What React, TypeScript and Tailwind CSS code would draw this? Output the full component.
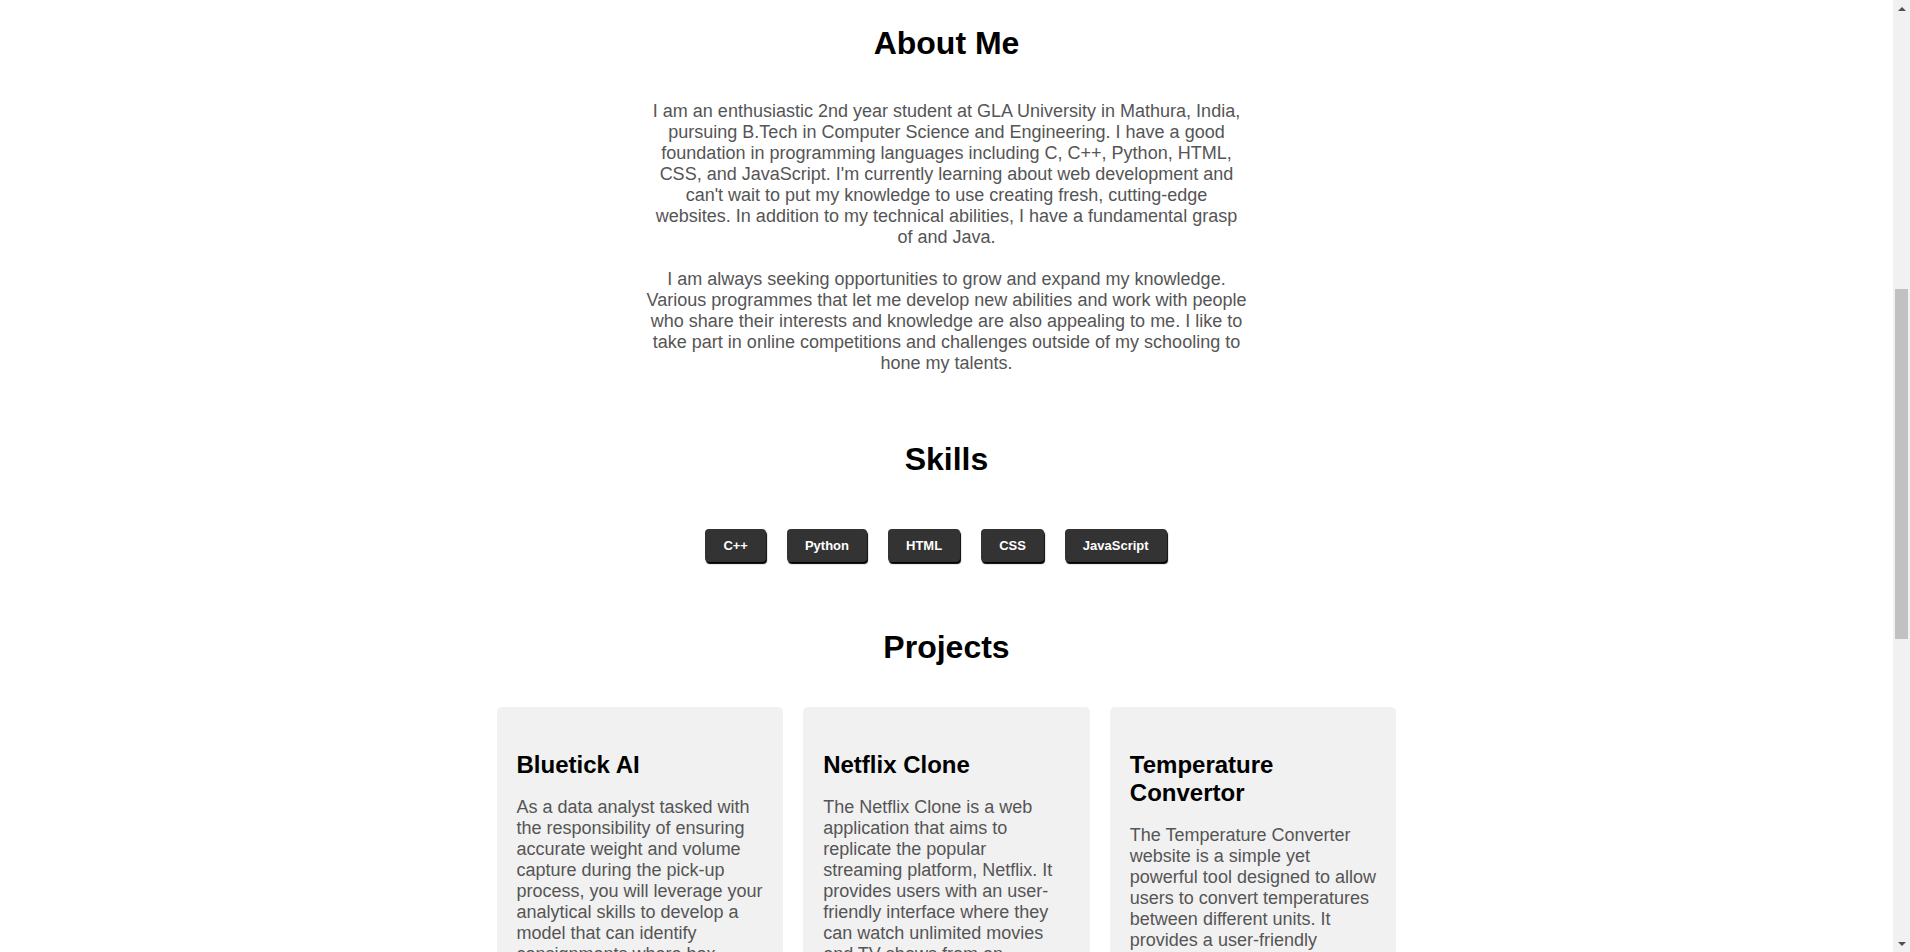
// App.tsx

const skills = ["C++", "Python", "HTML", "CSS", "JavaScript"];

const projects = [
  {
    title: "Bluetick AI",
    text: "As a data analyst tasked with the responsibility of ensuring accurate weight and volume capture during the pick-up process, you will leverage your analytical skills to develop a model that can identify consignments where box dimensions and weight have been captured incorrectly.",
  },
  {
    title: "Netflix Clone",
    text: "The Netflix Clone is a web application that aims to replicate the popular streaming platform, Netflix. It provides users with an user-friendly interface where they can watch unlimited movies and TV shows from an extensive library of content.",
  },
  {
    title: "Temperature Convertor",
    text: "The Temperature Converter website is a simple yet powerful tool designed to allow users to convert temperatures between different units. It provides a user-friendly interface to switch between Celsius, Fahrenheit and Kelvin.",
  },
];

function Scrollbar() {
  return (
    <div className="flex w-[17px] shrink-0 flex-col items-center bg-[#f1f1f1]">
      <div className="flex h-[17px] items-center justify-center">
        <div className="h-0 w-0 border-x-[4px] border-b-[4px] border-x-transparent border-b-[#505050]" />
      </div>
      <div className="mt-[272px] h-[350px] w-[13px] bg-[#c1c1c1]" />
      <div className="flex-1" />
      <div className="flex h-[17px] items-center justify-center">
        <div className="h-0 w-0 border-x-[4px] border-t-[4px] border-x-transparent border-t-[#505050]" />
      </div>
    </div>
  );
}

export default function App() {
  return (
    <div className="flex h-[952px] overflow-hidden bg-white font-['Liberation_Sans',Arial,sans-serif]">
      <main className="flex flex-1 flex-col items-center pt-[25px]">
        {/* About */}
        <h2 className="text-[32px] leading-[37px] font-bold text-black">About Me</h2>
        <p className="mt-[39px] w-[600px] text-center text-[18px] leading-[21px] text-[#555]">
          I am an enthusiastic 2nd year student at GLA University in Mathura, India, pursuing B.Tech in
          Computer Science and Engineering. I have a good foundation in programming languages including C,
          C++, Python, HTML, CSS, and JavaScript. I'm currently learning about web development and can't
          wait to put my knowledge to use creating fresh, cutting-edge websites. In addition to my technical
          abilities, I have a fundamental grasp of and Java.
          <br />
          <br />
          I am always seeking opportunities to grow and expand my knowledge. Various programmes that let me
          develop new abilities and work with people who share their interests and knowledge are also
          appealing to me. I like to take part in online competitions and challenges outside of my schooling
          to hone my talents.
        </p>

        {/* Skills */}
        <h2 className="mt-[67px] text-[32px] leading-[37px] font-bold text-black">Skills</h2>
        <div className="mt-[51px] flex justify-center">
          {skills.map((s) => (
            <span
              key={s}
              className="mr-[21px] flex h-[33px] items-center rounded-[4px] bg-[#333] px-[18px] text-[13px] font-bold text-white shadow-[1px_2px_1px_#000]"
            >
              {s}
            </span>
          ))}
        </div>

        {/* Projects */}
        <h2 className="mt-[67px] text-[32px] leading-[37px] font-bold text-black">Projects</h2>
        <div className="mt-[41px] grid w-[900px] grid-cols-3 gap-[20px]">
          {projects.map((p) => (
            <div key={p.title} className="rounded-[5px] bg-[#f1f1f1] px-[20px] pt-[20px] pb-[24px]">
              <h3 className="mt-[24px] text-[24px] leading-[28px] font-bold text-black">{p.title}</h3>
              <p className="mt-[18px] text-[18px] leading-[21px] text-[#555]">{p.text}</p>
            </div>
          ))}
        </div>
      </main>
      <Scrollbar />
    </div>
  );
}
